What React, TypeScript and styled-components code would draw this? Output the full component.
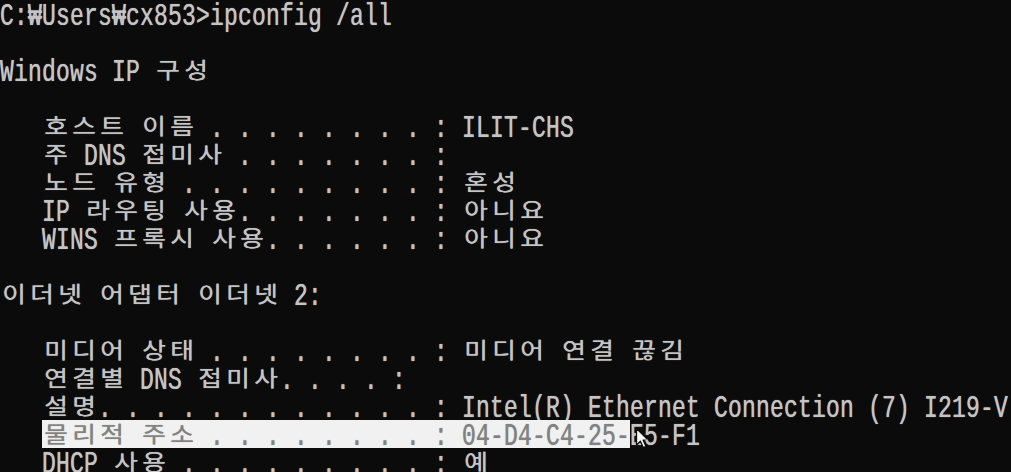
import React from 'react';
import styled, { createGlobalStyle } from 'styled-components';

const CELL = 14;
const ROW = 28;

const GlobalStyle = createGlobalStyle`
  html, body {
    margin: 0;
    padding: 0;
    background: #0b0b0b;
    overflow: hidden;
  }
`;

const Screen = styled.div`
  width: 1011px;
  height: 472px;
  overflow: hidden;
  background: #0b0b0b;
  color: #c4c4c4;
  display: flex;
  flex-direction: column;
`;

const Line = styled.div`
  display: flex;
  height: ${ROW}px;
  flex-shrink: 0;
  white-space: pre;
`;

const Cell = styled.span<{ $wide: boolean; $hl: boolean }>`
  position: relative;
  flex-shrink: 0;
  width: ${(p) => (p.$wide ? CELL * 2 : CELL)}px;
  height: ${ROW}px;
  display: flex;
  justify-content: center;
  align-items: ${(p) => (p.$wide ? 'center' : 'flex-start')};
  background: ${(p) => (p.$hl ? '#f1f1f1' : 'transparent')};
  color: ${(p) => (p.$hl ? '#828282' : 'inherit')};
  text-shadow: 0 0 0.7px currentColor;
`;

const Narrow = styled.span`
  display: block;
  font-family: 'Liberation Mono', 'DejaVu Sans Mono', monospace;
  font-size: 23px;
  line-height: 16px;
  height: 16px;
  margin-top: 10.9px;
  transform-origin: 50% 14.1px;
  transform: scaleY(1.4);
`;

const Wide = styled.span`
  display: block;
  font-family: 'Noto Sans CJK KR', 'Noto Sans', sans-serif;
  font-size: 22px;
  line-height: 1;
  transform: translateY(-2px) scaleX(1.17);
`;

const Pointer = styled.svg`
  position: absolute;
  left: 5px;
  top: 7px;
  width: 15px;
  height: 22px;
`;

const isWide = (ch: string) => /[\u1100-\u11ff\u3130-\u318f\uac00-\ud7af]/.test(ch);

type Row = { text: string; hl?: [number, number]; pointerAt?: number };

const rows: Row[] = [
  { text: 'C:₩Users₩cx853>ipconfig /all' },
  { text: '' },
  { text: 'Windows IP 구성' },
  { text: '' },
  { text: '   호스트 이름 . . . . . . . . : ILIT-CHS' },
  { text: '   주 DNS 접미사 . . . . . . . :' },
  { text: '   노드 유형 . . . . . . . . . : 혼성' },
  { text: '   IP 라우팅 사용. . . . . . . : 아니요' },
  { text: '   WINS 프록시 사용. . . . . . : 아니요' },
  { text: '' },
  { text: '이더넷 어댑터 이더넷 2:' },
  { text: '' },
  { text: '   미디어 상태 . . . . . . . . : 미디어 연결 끊김' },
  { text: '   연결별 DNS 접미사. . . . :' },
  { text: '   설명. . . . . . . . . . . . : Intel(R) Ethernet Connection (7) I219-V' },
  { text: '   물리적 주소 . . . . . . . . : 04-D4-C4-25-E5-F1', hl: [3, 44], pointerAt: 45 },
  { text: '   DHCP 사용 . . . . . . . . . : 예' },
];

const TermLine: React.FC<{ row: Row }> = ({ row }) => {
  let col = 0;
  const cells = Array.from(row.text).map((ch, i) => {
    const wide = isWide(ch);
    const start = col;
    col += wide ? 2 : 1;
    const hl = !!row.hl && start >= row.hl[0] && start <= row.hl[1];
    return (
      <Cell key={i} $wide={wide} $hl={hl}>
        {wide ? <Wide>{ch}</Wide> : <Narrow>{ch}</Narrow>}
        {row.pointerAt === start && (
          <Pointer viewBox="0 0 15 22">
            <path
              d="M1.5 1.5 L1.5 18 L5.4 14.2 L8.3 20.6 L11 19.4 L8.2 13.2 L13.4 13.2 Z"
              fill="#f6f6f6"
              stroke="#0e0e0e"
              strokeWidth="1.3"
              strokeLinejoin="round"
            />
          </Pointer>
        )}
      </Cell>
    );
  });
  return <Line>{cells}</Line>;
};

export default function App() {
  return (
    <>
      <GlobalStyle />
      <Screen>
        {rows.map((r, i) => (
          <TermLine key={i} row={r} />
        ))}
      </Screen>
    </>
  );
}
